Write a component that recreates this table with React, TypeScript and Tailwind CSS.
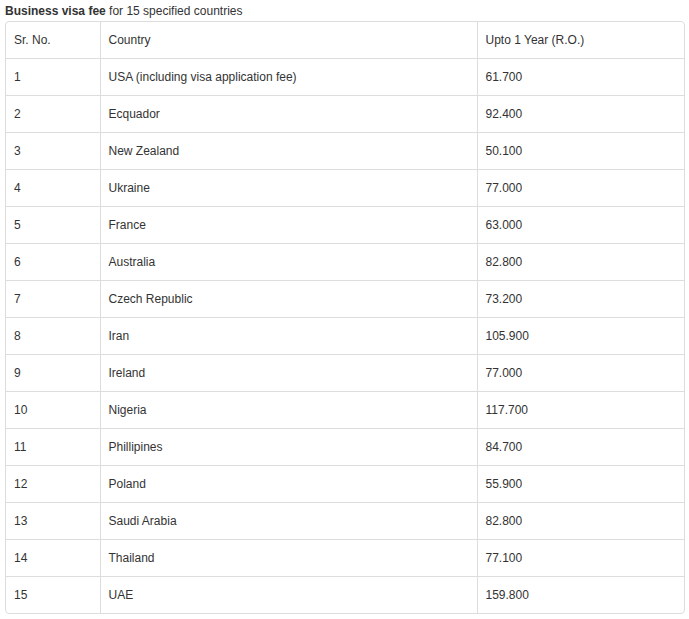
const rows: [string, string, string][] = [
  ['1', 'USA (including visa application fee)', '61.700'],
  ['2', 'Ecquador', '92.400'],
  ['3', 'New Zealand', '50.100'],
  ['4', 'Ukraine', '77.000'],
  ['5', 'France', '63.000'],
  ['6', 'Australia', '82.800'],
  ['7', 'Czech Republic', '73.200'],
  ['8', 'Iran', '105.900'],
  ['9', 'Ireland', '77.000'],
  ['10', 'Nigeria', '117.700'],
  ['11', 'Phillipines', '84.700'],
  ['12', 'Poland', '55.900'],
  ['13', 'Saudi Arabia', '82.800'],
  ['14', 'Thailand', '77.100'],
  ['15', 'UAE', '159.800'],
]

export default function App() {
  return (
    <div
      className="bg-white text-[#333] text-[12px] px-[5px]"
      style={{ fontFamily: '"Liberation Sans", Arial, sans-serif' }}
    >
      <p className="h-[21px] pt-[1px] leading-[20px]">
        <b>Business visa fee</b> for 15 specified countries
      </p>

      {/* bordered table */}
      <div className="w-[680px] border border-[#ddd] rounded-[4px] overflow-hidden">
        <table className="w-full border-collapse">
          <thead>
            <tr>
              <th className="w-[94px] px-2 py-2 leading-[20px] text-left font-normal">Sr. No.</th>
              <th className="w-[377px] px-2 py-2 leading-[20px] text-left font-normal border-l border-[#ddd]">Country</th>
              <th className="px-2 py-2 leading-[20px] text-left font-normal border-l border-[#ddd]">Upto 1 Year (R.O.)</th>
            </tr>
          </thead>
          <tbody>
            {rows.map(([no, country, fee]) => (
              <tr key={no} className="border-t border-[#ddd]">
                <td className="px-2 py-2 leading-[20px]">{no}</td>
                <td className="px-2 py-2 leading-[20px] border-l border-[#ddd]">{country}</td>
                <td className="px-2 py-2 leading-[20px] border-l border-[#ddd]">{fee}</td>
              </tr>
            ))}
          </tbody>
        </table>
      </div>
    </div>
  )
}
